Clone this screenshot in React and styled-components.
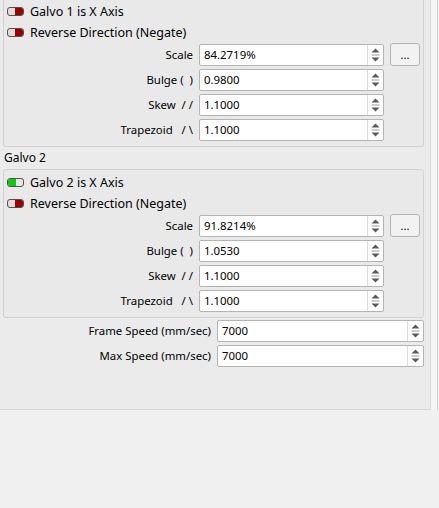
import React from 'react'
import styled, { createGlobalStyle } from 'styled-components'

const GlobalStyle = createGlobalStyle`
  html, body {
    margin: 0;
    padding: 0;
    background: #f0f0f0;
  }
  body {
    font-family: "Noto Sans", "Open Sans", sans-serif;
    font-size: 11.4px;
    color: #000;
  }
`

const Frame = styled.div`
  display: flex;
  width: 437px;
  height: 410px;
  border-right: 1px solid #d4d4d4;
  background: #f4f4f4;
`

const Panel = styled.div`
  width: 430px;
  height: 409px;
  border-right: 1px solid #d8d8d8;
  border-bottom: 1px solid #d8d8d8;
  background: #ebebeb;
  display: flex;
  flex-direction: column;
`

const GroupBox = styled.div`
  margin-left: 3px;
  width: 419px;
  background: #e9e9e9;
  border: 1px solid #d2d2d2;
  border-top: ${props => props.clipped ? 'none' : '1px solid #d2d2d2'};
  border-radius: ${props => props.clipped ? '0 0 3px 3px' : '3px'};
  padding: ${props => props.clipped ? '1px' : '2px'} 0 5px;
  display: flex;
  flex-direction: column;
`

const GroupTitle = styled.div`
  height: 22px;
  line-height: 22px;
  padding-left: 4px;
  font-size: 12px;
`

const ToggleRow = styled.div`
  display: flex;
  align-items: center;
  gap: 6px;
  height: 21px;
  padding-left: 3px;
  font-size: 12.5px;
`

const Fields = styled.div`
  display: grid;
  grid-template-columns: 189px 185px 30px;
  column-gap: 6px;
  row-gap: 3px;
  margin-top: 1px;
`

const BottomFields = styled.div`
  display: grid;
  grid-template-columns: 211px 207px;
  column-gap: 6px;
  row-gap: 3px;
  margin-top: 2px;
`

const Label = styled.div`
  height: 22px;
  line-height: 22px;
  text-align: right;
  white-space: pre;
`

const SpinBox = styled.div`
  display: flex;
  height: 22px;
  box-sizing: border-box;
  border: 1px solid #b4b4b4;
  border-radius: 2px;
  background: #fff;
`

const SpinText = styled.div`
  flex: 1;
  line-height: 20px;
  padding-left: 4px;
`

const SpinButtons = styled.div`
  width: 15px;
  border-left: 1px solid #dcdcdc;
  display: flex;
  align-items: center;
  justify-content: center;
`

const MoreButton = styled.div`
  height: 23px;
  margin-top: -1px;
  box-sizing: border-box;
  border: 1px solid #b4b4b4;
  border-radius: 3px;
  background: #f2f2f2;
  text-align: center;
  line-height: 22px;
  font-size: 11px;
`

const Toggle = ({ on }) => (
  <svg width="17" height="9" viewBox="0 0 17 9">
    <rect x="0.5" y="0.5" width="16" height="8" rx="2.5" fill={on ? '#e6e6e6' : '#e2dcdc'} stroke="#505050" />
    {on
      ? <path d="M3 1 H9 V8 H3 A2 2 0 0 1 1 6 V3 A2 2 0 0 1 3 1 Z" fill="#11c811" />
      : <path d="M8 1 H14 A2 2 0 0 1 16 3 V6 A2 2 0 0 1 14 8 H8 Z" fill="#9c0000" />}
  </svg>
)

const SpinArrows = () => (
  <svg width="9" height="14" viewBox="0 0 9 14">
    <path d="M4.5 0.5 L8.5 4.5 H0.5 Z" fill="#5a5a5a" />
    <rect x="0.5" y="6.5" width="8" height="1" fill="#9a9a9a" />
    <path d="M0.5 9.5 H8.5 L4.5 13.5 Z" fill="#5a5a5a" />
  </svg>
)

const Spin = ({ value }) => (
  <SpinBox>
    <SpinText>{value}</SpinText>
    <SpinButtons><SpinArrows /></SpinButtons>
  </SpinBox>
)

const GalvoFields = ({ scale, bulge }) => (
  <Fields>
    <Label>Scale</Label>
    <Spin value={scale} />
    <MoreButton>...</MoreButton>
    <Label>{'Bulge (  )'}</Label>
    <Spin value={bulge} />
    <div />
    <Label>{'Skew  / /'}</Label>
    <Spin value="1.1000" />
    <div />
    <Label>{'Trapezoid   / \\'}</Label>
    <Spin value="1.1000" />
    <div />
  </Fields>
)

export default function App() {
  return (
    <>
      <GlobalStyle />
      <Frame>
        <Panel>
          <GroupBox clipped>
            <ToggleRow><Toggle /> Galvo 1 is X Axis</ToggleRow>
            <ToggleRow><Toggle /> Reverse Direction (Negate)</ToggleRow>
            <GalvoFields scale="84.2719%" bulge="0.9800" />
          </GroupBox>
          <GroupTitle>Galvo 2</GroupTitle>
          <GroupBox>
            <ToggleRow><Toggle on /> Galvo 2 is X Axis</ToggleRow>
            <ToggleRow><Toggle /> Reverse Direction (Negate)</ToggleRow>
            <GalvoFields scale="91.8214%" bulge="1.0530" />
          </GroupBox>
          <BottomFields>
            <Label>Frame Speed (mm/sec)</Label>
            <Spin value="7000" />
            <Label>Max Speed (mm/sec)</Label>
            <Spin value="7000" />
          </BottomFields>
        </Panel>
      </Frame>
    </>
  )
}
